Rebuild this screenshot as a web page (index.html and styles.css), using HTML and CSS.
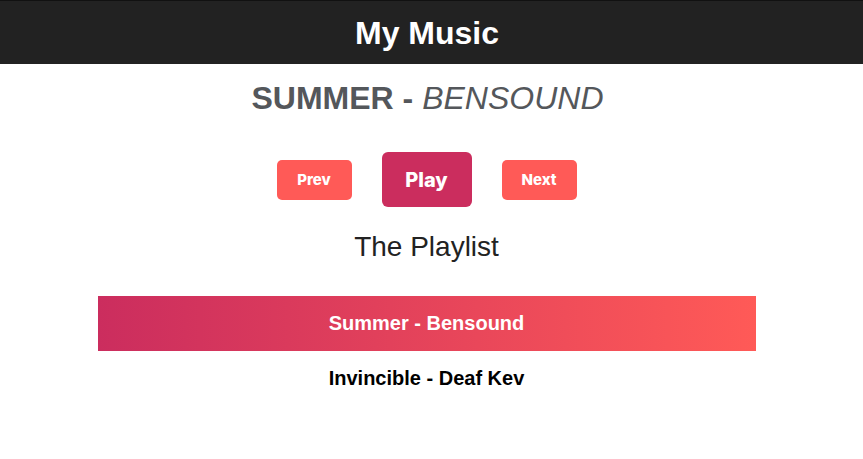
FILE: index.html
```html
<!DOCTYPE html>
<html>
<head>
<meta charset="utf-8">
<link rel="stylesheet" href="styles.css">
</head>
<body>
<header class="topbar"><h1 class="brand">My Music</h1></header>
<main class="main">
  <h2 class="now"><b>SUMMER - </b><i>BENSOUND</i></h2>
  <div class="controls">
    <button class="btn btn-small">Prev</button>
    <button class="btn btn-play">Play</button>
    <button class="btn btn-small">Next</button>
  </div>
  <h3 class="pl-title">The Playlist</h3>
  <ul class="playlist">
    <li class="track active">Summer - Bensound</li>
    <li class="track">Invincible - Deaf Kev</li>
  </ul>
</main>
</body>
</html>
```
FILE: styles.css
```css
html, body { margin: 0; padding: 0; background: #fff; }
body { font-family: "Liberation Sans", Arial, sans-serif; }
.topbar {
  background: #222;
  border-top: 1px solid #111;
  height: 63px;
  display: flex;
  align-items: center;
  justify-content: center;
  padding-right: 9px;
}
.brand { margin: 0; color: #fff; font-size: 32px; font-weight: bold; line-height: 1; }
.main {
  display: flex;
  flex-direction: column;
  align-items: center;
  padding-right: 10px;
}
.now {
  margin: 16px 0 0;
  padding-left: 2px;
  font-size: 32px;
  line-height: 37px;
  color: #54575b;
  font-weight: normal;
}
.now b { font-weight: bold; }
.now i { font-style: italic; font-weight: normal; }
.controls {
  margin-top: 35px;
  display: flex;
  align-items: center;
  gap: 30px;
}
.btn {
  border: none;
  color: #fff;
  font-family: "Inter", "Liberation Sans", sans-serif;
  font-weight: 800;
  border-radius: 5px;
  padding: 0;
}
.btn-small { background: #ff5a57; font-size: 15px; height: 40px; width: 75px; }
.btn-play { background: #cb2d5e; font-size: 20px; height: 55px; width: 90px; border-radius: 6px; }
.pl-title {
  margin: 24px 0 0;
  font-size: 28px;
  line-height: 32px;
  font-weight: normal;
  color: #222;
}
.playlist {
  list-style: none;
  margin: 33px 0 0;
  padding: 0;
  width: 658px;
}
.track {
  height: 55px;
  display: flex;
  align-items: center;
  justify-content: center;
  font-size: 20px;
  font-weight: bold;
  color: #000;
}
.track.active {
  background: linear-gradient(to right, #cb2d5e, #ff5a57);
  color: #fff;
}
```
